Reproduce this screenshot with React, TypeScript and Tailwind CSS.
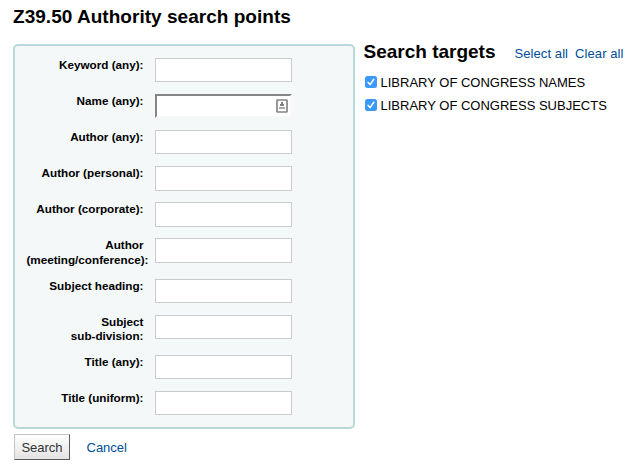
const fields = [
  { lines: ['Keyword (any):'], row: 'h-[36px]', input: 'h-[24px]' },
  { lines: ['Name (any):'], row: 'h-[36px]', input: 'h-[24px]', active: true },
  { lines: ['Author (any):'], row: 'h-[36px]', input: 'h-[24px]' },
  { lines: ['Author (personal):'], row: 'h-[36px]', input: 'h-[25px]' },
  { lines: ['Author (corporate):'], row: 'h-[36px]', input: 'h-[25px]' },
  { lines: ['Author', '(meeting/conference):'], row: 'h-[41px]', input: 'h-[25px]' },
  { lines: ['Subject heading:'], row: 'h-[36px]', input: 'h-[24px]' },
  { lines: ['Subject', 'sub-division:'], row: 'h-[40px]', input: 'h-[24px]', tight: true },
  { lines: ['Title (any):'], row: 'h-[36px]', input: 'h-[24px]' },
  { lines: ['Title (uniform):'], row: 'h-[36px]', input: 'h-[24px]' },
];

function ContactIcon() {
  return (
    <svg width="12" height="14" viewBox="0 0 12 14" fill="none">
      <rect x="1" y="1" width="10" height="12" rx="0.5" stroke="#858585" strokeWidth="1.7" />
      <path d="M5 3h2v2h1v2H4V5h1z" fill="#808080" />
      <path d="M3 8h6v2H3z" fill="#a8a8a8" />
    </svg>
  );
}

function Target({ name }: { name: string }) {
  return (
    <label className="flex h-[23px] items-start whitespace-nowrap text-[13px] leading-[23px]">
      <span className="mt-[5px] mr-[4px] ml-px flex size-[12px] items-center justify-center rounded-[2.5px] bg-[#3b99fc]">
        <svg width="12" height="12" viewBox="0 0 12 12" fill="none">
          <path d="M3.1 6.4 5.1 8.6 8.8 3.3" stroke="white" strokeWidth="1.5" strokeLinecap="round" strokeLinejoin="round" />
        </svg>
      </span>
      <span className="-ml-[0.5px]">{name}</span>
    </label>
  );
}

export default function App() {
  return (
    <main className="h-[471px] w-[637px] overflow-hidden bg-white pl-[13px] font-['Liberation_Sans',Arial,sans-serif] text-black">
      <h1 className="h-[44px] pt-[5px] text-[19px] leading-[24px] font-bold tracking-[0.03px] whitespace-nowrap">Z39.50 Authority search points</h1>
      <div className="flex items-start">
        <fieldset className="h-[385px] w-[342px] shrink-0 rounded-[5px] border-2 border-[#b9d8d9] bg-[#f4f8f9] pt-[12px]">
          {fields.map((field) => (
            <div key={field.lines[0]} className={`flex items-start ${field.row}`}>
              <div
                className={`w-[128.5px] shrink-0 text-right text-[11.7px] font-bold whitespace-nowrap ${
                  field.tight ? 'leading-[14px]' : 'leading-[14.5px]'
                }`}
              >
                {field.lines.map((line) => (
                  <div key={line} className={line.startsWith('(meeting') ? '-mr-[5px]' : ''}>
                    {line}
                  </div>
                ))}
              </div>
              <div
                className={`ml-[11.5px] flex w-[137px] items-center justify-end bg-white ${field.input} ${
                  field.active
                    ? 'border-2 border-t-[#858585] border-r-[#f8f8f8] border-b-[#f8f8f8] border-l-[#858585] pr-[2px]'
                    : 'border border-[#c9cbcc]'
                }`}
              >
                {field.active && <ContactIcon />}
              </div>
            </div>
          ))}
        </fieldset>
        <section className="ml-[9px]">
          <div className="flex h-[27px] items-baseline whitespace-nowrap">
            <h2 className="mt-[-5px] -ml-[0.5px] text-[19px] leading-[24px] font-bold">Search targets</h2>
            <a className="ml-[19px] text-[13px] tracking-[0.08px] text-[#004d99]">Select all</a>
            <a className="ml-[7px] text-[13px] tracking-[0.08px] text-[#004d99]">Clear all</a>
          </div>
          <Target name="LIBRARY OF CONGRESS NAMES" />
          <Target name="LIBRARY OF CONGRESS SUBJECTS" />
        </section>
      </div>
      <div className="mt-[5px] flex items-center text-[13px]">
        <button className="ml-px h-[26px] w-[56px] border border-t-[#c4c4c4] border-r-[#5a5a5a] border-b-[#5a5a5a] border-l-[#c4c4c4] bg-linear-to-b from-white to-[#e3e3e3] pt-px text-[#333]">
          Search
        </button>
        <a className="ml-[16.5px] pt-[2px] text-[#004d99]">Cancel</a>
      </div>
    </main>
  );
}
